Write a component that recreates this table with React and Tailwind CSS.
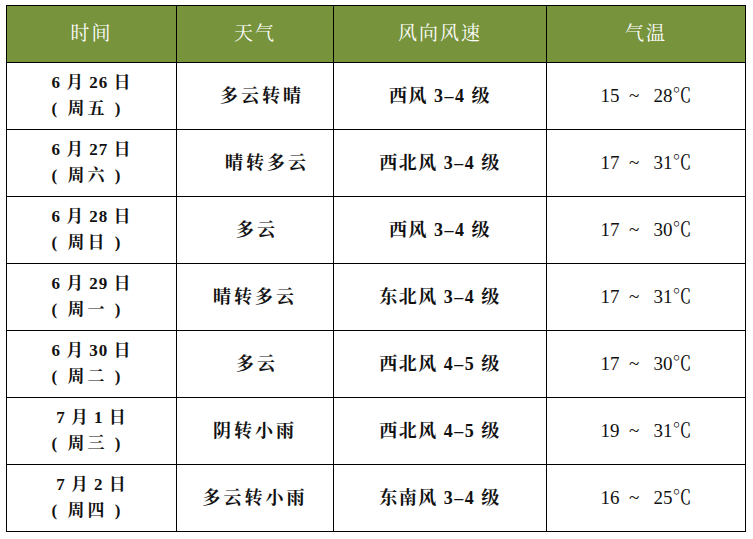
import React from "react";

const rows = [
  { date: "6 月 26 日", week: "周五", weather: "多云转晴", wind: "西风 3–4 级", low: "15", high: "28", wx: "ml-[14px]" },
  { date: "6 月 27 日", week: "周六", weather: "晴转多云", wind: "西北风 3–4 级", low: "17", high: "31", wx: "ml-[24px]" },
  { date: "6 月 28 日", week: "周日", weather: "多云", wind: "西风 3–4 级", low: "17", high: "30", wx: "ml-[4px]" },
  { date: "6 月 29 日", week: "周一", weather: "晴转多云", wind: "东北风 3–4 级", low: "17", high: "31", wx: "" },
  { date: "6 月 30 日", week: "周二", weather: "多云", wind: "西北风 4–5 级", low: "17", high: "30", wx: "ml-[4px]" },
  { date: "7 月 1 日", week: "周三", weather: "阴转小雨", wind: "西北风 4–5 级", low: "19", high: "31", wx: "" },
  { date: "7 月 2 日", week: "周四", weather: "多云转小雨", wind: "东南风 3–4 级", low: "16", high: "25", wx: "" },
];

const serif = "font-['Liberation_Serif','Noto_Serif_CJK_SC','Noto_Sans_CJK_SC',serif]";
const cell = "border border-black text-center align-middle p-0";

export default function App() {
  return (
    <div className="bg-white w-[753px] h-[539px] pl-[6px] pt-[5px]">
      <table className={`border-collapse ${serif} text-[#111]`}>
        <colgroup>
          <col className="w-[170px]" />
          <col className="w-[157px]" />
          <col className="w-[213px]" />
          <col className="w-[199px]" />
        </colgroup>
        <thead>
          <tr className="h-[57px] bg-[#77933c] text-white text-[19px] tracking-[2px]">
            <th className={`${cell} font-normal`}>时间</th>
            <th className={`${cell} font-normal`}>天气</th>
            <th className={`${cell} font-normal`}>风向风速</th>
            <th className={`${cell} font-normal`}>气温</th>
          </tr>
        </thead>
        <tbody>
          {rows.map((r) => (
            <tr key={r.date} className="h-[67px]">
              <td className={`${cell} font-bold text-[17px] leading-[26px]`}>
                <div className="whitespace-pre tracking-[1px]">{r.date}</div>
                <div className="whitespace-pre -ml-[8px] tracking-[3px]">{`( ${r.week} )`}</div>
              </td>
              <td className={`${cell} font-bold text-[18px] tracking-[3px]`}>
                <span className={r.wx}>{r.weather}</span>
              </td>
              <td className={`${cell} font-bold text-[18px] tracking-[1.5px] whitespace-pre`}>{r.wind}</td>
              <td className={`${cell} text-[19px] whitespace-pre`}>
                {`${r.low}  ~   ${r.high}℃`}
              </td>
            </tr>
          ))}
        </tbody>
      </table>
    </div>
  );
}
